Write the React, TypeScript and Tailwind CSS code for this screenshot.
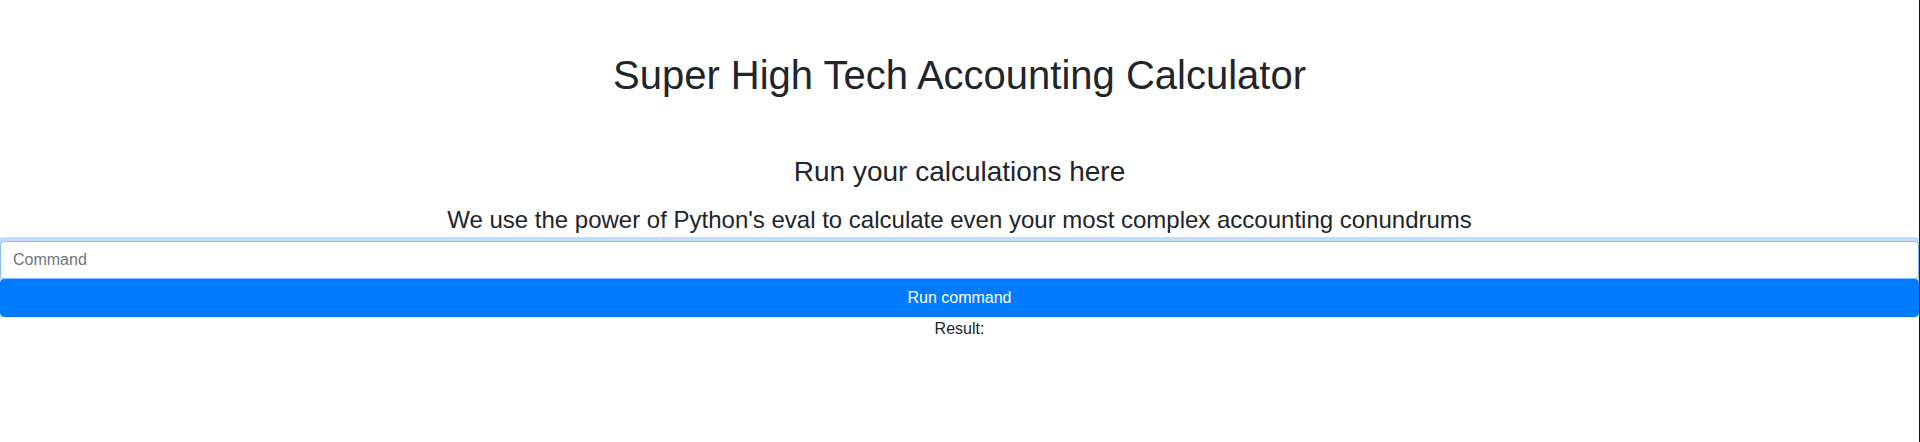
import { useState } from 'react';

export default function App() {
  const [command, setCommand] = useState('');
  const [result, setResult] = useState('');

  const runCommand = (): void => {
    setResult(command ? '' : '');
  };

  return (
    <div
      className="min-h-screen bg-white border-r border-[#111111] text-[#212529] text-center"
      style={{ fontFamily: '"Liberation Sans", Arial, sans-serif' }}
    >
      <h1 className="pt-[51px] text-[40px] leading-[48px] font-normal">Super High Tech Accounting Calculator</h1>

      <div className="mt-[56px]">
        <h3 className="text-[28px] leading-[34px] font-normal">Run your calculations here</h3>
        <h4 className="mt-[16px] text-[24px] leading-[29px] font-normal">
          We use the power of Python's eval to calculate even your most complex accounting conundrums
        </h4>

        <form
          className="mt-[7px] flex flex-col"
          onSubmit={(e) => {
            e.preventDefault();
            runCommand();
          }}
        >
          <input
            type="text"
            autoFocus
            value={command}
            onChange={(e) => setCommand(e.target.value)}
            placeholder="Command"
            className="h-[38px] w-full rounded-[4px] border border-[#80bdff] bg-white px-3 text-left text-base text-[#495057] caret-[#212529] placeholder:text-[#6c757d] shadow-[0_0_0_4px_rgba(0,123,255,0.25)] outline-none"
          />
          <button
            type="submit"
            className="h-[38px] w-full rounded-[4px] border border-[#007bff] bg-[#007bff] text-base text-white"
          >
            Run command
          </button>
        </form>

        <div className="text-base leading-6">Result: {result}</div>
      </div>
    </div>
  );
}
